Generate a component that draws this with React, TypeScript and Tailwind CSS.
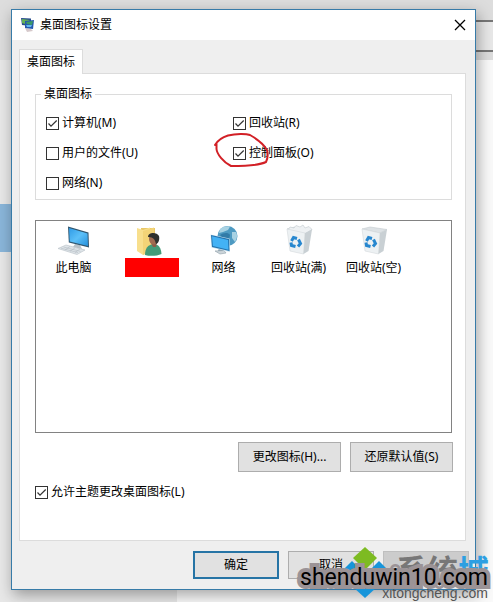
import clsx from "clsx";
import { useState } from "react";
import type { ReactNode } from "react";

type CheckOptionProps = {
  label: string;
  defaultChecked?: boolean;
  circled?: boolean;
};

const CheckOption = ({ label, defaultChecked = false, circled = false }: CheckOptionProps) => (
  <label className="relative flex h-[30px] items-center gap-[3px]">
    <span className="grid h-[13px] w-[13px] shrink-0">
      <input
        type="checkbox"
        defaultChecked={defaultChecked}
        className="peer col-start-1 row-start-1 h-[13px] w-[13px] appearance-none border border-[#333333] bg-white"
      />
      <svg
        viewBox="0 0 13 13"
        className="pointer-events-none invisible col-start-1 row-start-1 h-[13px] w-[13px] peer-checked:visible"
      >
        <path d="M2.5 6.5 L5 9.2 L10.7 3.5" fill="none" stroke="#333" strokeWidth="1.2" />
      </svg>
    </span>
    <span>{label}</span>
    {circled && (
      <svg
        viewBox="0 0 56 38"
        className="pointer-events-none absolute -top-[6px] -left-[19px] h-[38px] w-[56px]"
      >
        <path
          d="M1 13 C4 8 9 5 14 3.5 C22 1.5 32 1.5 36 3 C43 7 49 11 53 18 C54 22 54 26 52 30 C44 34 28 34 17 34 C9 30 3 22 2.500 17 L2.500 11"
          fill="none"
          stroke="#d22026"
          strokeWidth="2"
          strokeLinecap="round"
          strokeLinejoin="round"
        />
      </svg>
    )}
  </label>
);

const ComputerIcon = () => (
  <svg viewBox="0 0 32 32" className="h-8 w-8">
    <defs>
      <linearGradient id="screen" x1="0" y1="0" x2="1" y2="1">
        <stop offset="0" stopColor="#2f9be6" />
        <stop offset="0.5" stopColor="#5cc0f8" />
        <stop offset="1" stopColor="#2590dc" />
      </linearGradient>
    </defs>
    <path d="M17 20 L22 21 L24 25 L15 23 Z" fill="#b9c2c8" />
    <path d="M10 2.500 L30.500 8.500 L31 23.500 L10.800 18.500 Z" fill="#30566f" />
    <path d="M11 4 L29.500 9.400 L30 22 L11.700 17.500 Z" fill="url(#screen)" />
    <path d="M0 24.500 L8 21 L27 26 L19 30.500 Z" fill="#dfe5e9" stroke="#b7c0c6" strokeWidth="0.6" />
    <path
      d="M3 24.200 L20 28.600 M5.500 23 L22.500 27.400 M7 26 L12 22.500 M12 27.300 L17 23.800 M17 28.500 L22 25"
      stroke="#b3bcc2"
      strokeWidth="0.6"
    />
  </svg>
);

const UserFolderIcon = () => (
  <svg viewBox="0 0 32 32" className="h-8 w-8">
    <path d="M8 4 L22 4 L22 27 L8 29 Z" fill="#e9c766" />
    <path d="M4 4 L10 6 L17 3.500 L17 26 L10 31 L4 27 Z" fill="#f8df8d" />
    <path d="M10 7 L21 3.500 L21 27 L10 31 Z" fill="#f3d477" />
    <path d="M12 31 C12 24 15 21 20 20 C26 20 28 24 28.500 30 C24 32 17 32.500 12 31 Z" fill="#439b78" />
    <path d="M18 19 L24 18 L23 23 L20 23 Z" fill="#8c5d48" />
    <ellipse cx="20.500" cy="15" rx="4.500" ry="5.500" fill="#a06b50" />
    <path d="M15 13 C15 8 24 8 26 12 C27 16 25 20 23 20 C22 16 21 13 15 13 Z" fill="#2e302c" />
  </svg>
);

const NetworkIcon = () => (
  <svg viewBox="0 0 32 32" className="h-8 w-8">
    <circle cx="19.500" cy="12" r="10" fill="#4e9ac2" />
    <path d="M12 5 C15 2.500 19 2 22 2.500 L20 6 L15 8 L11 9 Z M24 8 L28 8 C29.500 11 29.500 14 27 18 L24 14 Z" fill="#a8d2e3" />
    <path d="M12 11 C15 9 20 8 22 11 L20 20 Z" fill="#327ba8" />
    <path d="M11 24 L15 25 L16 28 L10 27 Z" fill="#8ba3b0" />
    <path d="M7 27 L16 26.500 L18 29 L12 30 Z" fill="#ccd5da" stroke="#8fa0aa" strokeWidth="0.6" />
    <path d="M2.500 10.500 L21.500 14.500 L22 28 L3.500 23.500 Z" fill="#c8e2ef" />
    <path d="M3 11 L21 15 L21.500 27 L4 23 Z" fill="#2473ae" />
    <path d="M4 12.300 L20 16 L20.500 25.700 L4.900 22 Z" fill="#43b2f5" />
  </svg>
);

const BinIcon = ({ full = false }: { full?: boolean }) => (
  <svg viewBox="0 0 32 32" className="h-8 w-8">
    <path d="M4 5 L12 3 L29 5.500 L22 9 Z" fill="#dde2e5" stroke="#c3cacf" strokeWidth="0.6" />
    {full && (
      <path
        d="M5 6 L7 3 L11 4 L13 1.500 L17 3 L20 1 L22 4 L26 2.500 L29 5.500 L22 10 L8 9 Z"
        fill="#eef1f3"
        stroke="#c9d0d4"
        strokeWidth="0.700"
      />
    )}
    <path d="M4 5 L22 9 L20.500 30 L7 27 Z" fill="#edf1f3" stroke="#d3d9dc" strokeWidth="0.6" />
    <path d="M22 9 L29 5.500 L25.500 27 L20.500 30 Z" fill="#c9d0d4" />
    {/* recycling arrows */}
    <g fill="none" stroke="#2787cf" strokeWidth="3">
      <path d="M8.500 17 L10.500 13.500 L14 14.500" />
      <path d="M15.500 15.500 L17.500 19.500 L15 22.500" />
      <path d="M12.500 22.500 L8.500 21.500 L8 18.500" />
    </g>
  </svg>
);

const TitleIcon = () => (
  <svg viewBox="0 0 16 16" className="h-4 w-4">
    <path d="M5 11 L11 12 L13 14 L7 15 Z" fill="#d6c9cb" />
    <path d="M1 1 L11 1.500 L11 9 L2 8 Z" fill="#284d8d" />
    <path d="M2 2 L10 3 L5 7 L2 6 Z" fill="#64b255" />
    <path d="M5 4 L14 3 L13 12 L5 11 Z" fill="#2559ae" />
    <path d="M6 5 L13 4 L12 8 L7 7 Z" fill="#3c9a65" />
    <path d="M6 8 L12 8 L11 10 L7 10 Z" fill="#61b7ef" />
  </svg>
);

type DesktopItem = {
  id: string;
  label: string;
  icon: ReactNode;
};

const desktopItems: DesktopItem[] = [
  { id: "pc", label: "此电脑", icon: <ComputerIcon /> },
  { id: "user", label: "", icon: <UserFolderIcon /> },
  { id: "network", label: "网络", icon: <NetworkIcon /> },
  { id: "bin-full", label: "回收站(满)", icon: <BinIcon full /> },
  { id: "bin-empty", label: "回收站(空)", icon: <BinIcon /> },
];

const buttonBase = "flex items-center justify-center text-black";

/* Windows that sit behind the dialog */
const Backdrop = () => (
  <div className="absolute inset-0 flex flex-col bg-[#f5f5f5]">
    <div className="flex h-[60px] flex-col bg-[#dddddd] pt-5">
      <div className="h-8 self-end border-y-2 border-[#777777] bg-[#e8e8e8] pl-5" />
    </div>
    <div className="flex flex-1">
      <div className="flex w-[177px] flex-col bg-[#e8e8e8] pt-36">
        <div className="h-12 bg-[#8ab6da]" />
      </div>
      <div className="flex-1 bg-[#fafafa]" />
    </div>
  </div>
);

const Watermark = () => (
  <div className="pointer-events-none absolute right-0 bottom-0 h-[58px] w-[200px]">
    <svg viewBox="0 0 60 58" className="absolute top-0 left-[43px] h-[58px] w-[60px]">
      <path d="M29 3 L41 14 L29 26 L17 14 Z" fill="#7dbb22" />
      <path d="M16 17 L28 29 L16 41 L4 29 Z" fill="#1795da" />
      <path d="M43 17 L55 29 L43 41 L31 29 Z" fill="#1795da" />
      <path d="M29 31 L41 43 L29 54 L17 43 Z" fill="#1795da" />
    </svg>
    <p className="absolute top-[7px] right-[4px] font-['Noto_Sans_CJK_SC',sans-serif] text-[31px] leading-[36px] font-bold text-[#777777]">
      系统<span className="text-[#2d9fe2]">城</span>
    </p>
    <p className="absolute right-[5px] bottom-[1px] font-['Liberation_Sans',sans-serif] text-[14px] leading-4 text-[#555555]">
      xitongcheng.com
    </p>
    <p className="absolute top-4 right-[5px] font-['Roboto',sans-serif] text-[23px] leading-[36px] text-black [-webkit-text-stroke:8px_#9b9396] [paint-order:stroke_fill]">
      shenduwin10.com
    </p>
  </div>
);

export default function App() {
  const [isOpen, setIsOpen] = useState(true);
  const close = () => setIsOpen(false);

  return (
    <main className="relative min-h-screen overflow-hidden pt-[9px] pr-[17px] pb-3 pl-[11px] font-['Noto_Sans','Noto_Sans_CJK_SC',sans-serif] text-[12px] leading-5 text-black">
      <Backdrop />

      {isOpen && (
        <div
          role="dialog"
          aria-labelledby="dialog-title"
          className="relative border border-[#377ba8] bg-[#efefef] shadow-[2px_5px_14px_rgba(0,0,0,0.35)]"
        >
          {/* Title bar */}
          <header className="flex h-[30px] items-center bg-white pr-[9px] pl-2">
            <TitleIcon />
            <h1 id="dialog-title" className="flex-1 pl-1">
              桌面图标设置
            </h1>
            <button type="button" aria-label="关闭" onClick={close}>
              <svg viewBox="0 0 12 12" className="h-3 w-3">
                <path d="M1 1 L11 11 M11 1 L1 11" stroke="#000" strokeWidth="1.300" />
              </svg>
            </button>
          </header>

          <div className="pt-[9px] pr-[9px] pb-[10px] pl-[7px]">
            <div role="tablist" className="flex">
              <button
                type="button"
                role="tab"
                aria-selected="true"
                className="relative z-10 -mb-px h-[25px] w-16 border border-b-0 border-[#dcdcdc] bg-white"
              >
                桌面图标
              </button>
            </div>

            <section className="border border-[#dcdcdc] bg-white pt-[10px] pr-[13px] pb-[33px] pl-[15px]">
              <fieldset className="border border-[#dcdcdc] pt-1 pb-px pl-[10px]">
                <legend className="-ml-[5px] px-[3px]">桌面图标</legend>
                <div className="grid grid-cols-[187px_1fr]">
                  <CheckOption label="计算机(M)" defaultChecked />
                  <CheckOption label="回收站(R)" defaultChecked />
                  <CheckOption label="用户的文件(U)" />
                  <CheckOption label="控制面板(O)" defaultChecked circled />
                  <CheckOption label="网络(N)" />
                </div>
              </fieldset>

              <ul className="mt-5 flex h-[213px] border border-[#828282] pt-[3px]">
                {desktopItems.map((item) => (
                  <li key={item.id} className="flex w-[75px] flex-col items-center gap-[2px]">
                    {item.icon}
                    {item.label ? (
                      <span className="whitespace-nowrap">{item.label}</span>
                    ) : (
                      <span className="ml-[6px] h-[19px] w-[54px] bg-[#ff0000]" />
                    )}
                  </li>
                ))}
              </ul>

              <div className="-mr-px mt-[9px] flex justify-end gap-[9px]">
                <button type="button" className={clsx(buttonBase, "h-[30px] w-[103px] border border-[#adadad] bg-[#e1e1e1]")}>
                  更改图标(H)...
                </button>
                <button type="button" className={clsx(buttonBase, "h-[30px] w-[103px] border border-[#adadad] bg-[#e1e1e1]")}>
                  还原默认值(S)
                </button>
              </div>

              <div className="mt-[5px] flex">
                <CheckOption label="允许主题更改桌面图标(L)" defaultChecked />
              </div>
            </section>

            {/* Footer */}
            <footer className="-mr-[3px] flex justify-end gap-[9px] pt-[10px]">
              <button
                type="button"
                onClick={close}
                className={clsx(buttonBase, "h-7 w-[86px] border-2 border-[#2674a5] bg-[#e1e1e1]")}
              >
                确定
              </button>
              <button
                type="button"
                onClick={close}
                className={clsx(buttonBase, "h-7 w-[86px] border border-[#adadad] bg-[#e1e1e1]")}
              >
                取消
              </button>
              <button
                type="button"
                disabled
                aria-label="应用"
                className={clsx(buttonBase, "h-7 w-[86px] border border-[#bfbfbf] bg-[#cccccc]")}
              />
            </footer>
          </div>
        </div>
      )}

      <Watermark />
    </main>
  );
}
